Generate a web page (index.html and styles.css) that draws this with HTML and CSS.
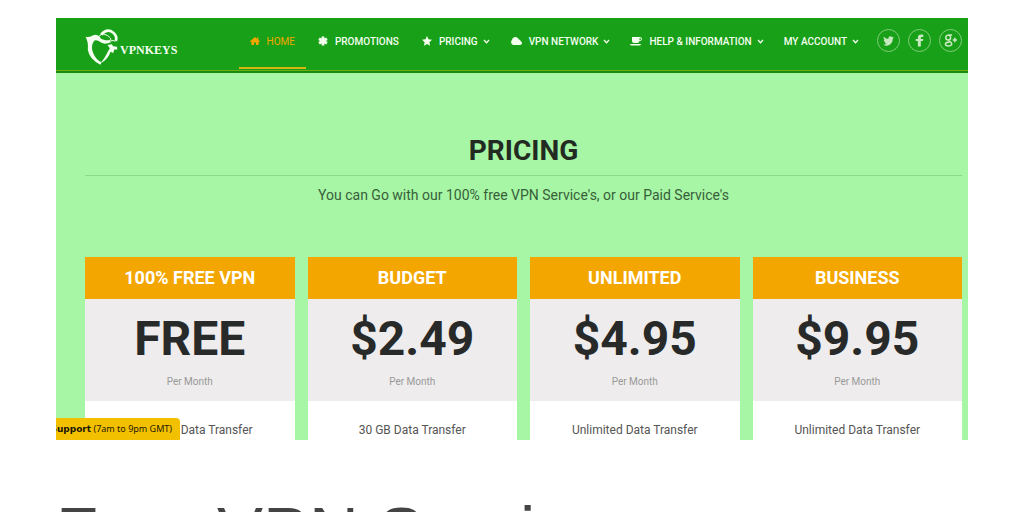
FILE: index.html
```html
<!DOCTYPE html>
<html lang="en">
<head>
<meta charset="utf-8">
<title>VPNKEYS Pricing</title>
<link rel="stylesheet" href="styles.css">
</head>
<body>
<div class="site">
  <header class="header">
    <a class="logo" href="#">
      <svg class="logo-mark" viewBox="104 56 98 108" aria-hidden="true">
        <path fill="#f4fff0" d="M105 79Q118 82 128 75Q138 70 146 78Q150 87 160 88Q170 92 178 88L181 96Q160 106 146 93Q134 86 130 93Q120 108 128 128Q136 148 153 156L150 163Q116 146 112 118Q114 94 105 79Z"/>
        <path fill="none" stroke="#f4fff0" stroke-width="8" d="M152 73Q166 56 182 63Q202 74 196 92"/>
        <path fill="none" stroke="#f4fff0" stroke-width="3" d="M142 80L156 70L172 76Q182 82 182 92M182 92Q188 88 194 93"/>
        <path fill="#f4fff0" d="M171 104L184 102L188 108L200 109L200 118L192 117L188 128L180 124Q174 146 150 159Q164 142 171 126L178 114Z"/>
      </svg>
      <span class="logo-text">VPNKEYS</span>
    </a>
    <nav class="nav" aria-label="Main">
      <a class="nav-item active" href="#"><svg class="icon" viewBox="0 0 10 10"><path d="M5 1L7 2.700V1.500H8.400V4L10 5.300L9.300 6L8.600 5.500V9H6V6.500H4V9H1.400V5.500L.7 6L0 5.300Z"/></svg>HOME</a>
      <a class="nav-item" href="#"><svg class="icon" viewBox="0 0 10 10"><path stroke="currentColor" stroke-width="2.800" d="M5 .5V9.500M1 2.700L9 7.300M9 2.700L1 7.300"/></svg>PROMOTIONS</a>
      <a class="nav-item menu" href="#"><svg class="icon" viewBox="0 0 10 10"><path d="M5 0L6.500 3.300L10 3.800L7.400 6.200L8.100 9.800L5 8L1.900 9.800L2.600 6.200L0 3.800L3.500 3.300Z"/></svg>PRICING<svg class="chevron" viewBox="0 0 7 5"><path d="M1 1L3.500 3.800L6 1"/></svg></a>
      <a class="nav-item menu" href="#"><svg class="icon wide" viewBox="0 0 12 10"><path d="M3 9A3 3 0 0 1 2 4Q2.500 1 5.500 1Q8 1 9 3.500Q10.500 3.500 10.600 5Q12 6 12 7Q12 9 10 9Z"/></svg>VPN NETWORK<svg class="chevron" viewBox="0 0 7 5"><path d="M1 1L3.500 3.800L6 1"/></svg></a>
      <a class="nav-item menu" href="#"><svg class="icon wide" viewBox="0 0 12 10"><path fill-rule="evenodd" d="M2 1H9.500Q12 1 12 3Q12 5 9.300 5.200Q9 7 7.500 7H4Q2 7 2 5ZM9.500 2V4.200Q11 4.200 11 3Q11 2 9.500 2ZM0 8H11Q11 9.500 9 9.500H2Q0 9.500 0 8Z"/></svg>HELP &amp; INFORMATION<svg class="chevron" viewBox="0 0 7 5"><path d="M1 1L3.500 3.800L6 1"/></svg></a>
      <a class="nav-item menu" href="#">MY ACCOUNT<svg class="chevron" viewBox="0 0 7 5"><path d="M1 1L3.500 3.800L6 1"/></svg></a>
    </nav>
    <div class="social">
      <a href="#" aria-label="Twitter"><svg viewBox="0 0 24 24"><path d="M22 6Q20 7 19.500 7Q21 6 21.500 4.500Q20 5.500 18.500 5.700C15 2.500 11 5 12 9Q7 9 3.500 5Q2 8.500 5 11Q4 11 3 10.400Q3 14 6.500 15H4.600Q5.600 17.500 8.500 18Q6 20 2 20C12 25 20 18 20 8.500Q21.500 7.500 22 6Z"/></svg></a>
      <a href="#" aria-label="Facebook"><svg viewBox="0 0 24 24"><path d="M9 23V13H5V9H9V7Q9 1 15 1H19V5.500H16.500Q14.500 5.500 14.500 7.500V9H19L18.300 13H14.500V23Z"/></svg></a>
      <a href="#" aria-label="Google Plus"><svg viewBox="0 0 24 24"><path fill="none" stroke="currentColor" stroke-width="2.800" d="M15 2H9C1 2 2 11 8 11C14 11 13 3 9 2M9 11Q8 13 11 14C17 18 14 22 8 22C0 22 1 15 10 15M16 11H24M20 7V15"/></svg></a>
    </div>
  </header>
  <main class="pricing">
    <h1 class="title">PRICING</h1>
    <p class="subtitle">You can Go with our 100% free VPN Service's, or our Paid Service's</p>
    <div class="plans">
      <section class="plan"><h2 class="plan-name">100% FREE VPN</h2><div class="plan-price"><strong class="amount">FREE</strong><span class="period">Per Month</span></div><p class="feature">Unlimited Data Transfer</p></section>
      <section class="plan"><h2 class="plan-name">BUDGET</h2><div class="plan-price"><strong class="amount">$2.49</strong><span class="period">Per Month</span></div><p class="feature">30 GB Data Transfer</p></section>
      <section class="plan"><h2 class="plan-name">UNLIMITED</h2><div class="plan-price"><strong class="amount">$4.95</strong><span class="period">Per Month</span></div><p class="feature">Unlimited Data Transfer</p></section>
      <section class="plan"><h2 class="plan-name">BUSINESS</h2><div class="plan-price"><strong class="amount">$9.95</strong><span class="period">Per Month</span></div><p class="feature">Unlimited Data Transfer</p></section>
    </div>
  </main>
  <div class="support"><span><b>Support</b> (7am to 9pm GMT)</span></div>
</div>
<h2 class="caption">Free VPN Service</h2>
</body>
</html>
```

FILE: styles.css
```css
* { box-sizing: border-box; }
body {
  margin: 0;
  padding: 18px 56px 0;
  height: 100vh;
  overflow: hidden;
  background: #fff;
  font-family: Roboto, "Liberation Sans", sans-serif;
}
h1, h2, p { margin: 0; }
a { color: inherit; text-decoration: none; }
.site { position: relative; overflow: hidden; background: #a6f6a6; }
.header {
  display: flex;
  padding: 0 6px 0 29px;
  height: 55px;
  background: #18a018;
  border-bottom: 2px solid #198a10;
  box-shadow: inset 0 -1px #6fb010;
  color: #f4fff0;
}
.logo { display: flex; align-items: center; gap: 2px; height: 57px; }
.logo-mark { width: 33px; height: 36px; }
.logo-text { padding-top: 8px; font: bold 12px "Liberation Serif", serif; }
.nav { display: flex; gap: 1px; margin-left: auto; height: 51px; }
.nav-item {
  display: flex;
  align-items: center;
  padding: 0 11px 3px;
  border-bottom: 2px solid transparent;
  font-size: 10px;
  font-weight: 500;
  white-space: nowrap;
}
.nav-item.menu { padding-right: 8px; }
.nav-item.active { color: #f3a600; border-color: #d8b810; font-weight: 400; }
.icon { width: 10px; height: 10px; margin-right: 7px; fill: currentColor; }
.icon.wide { width: 12px; }
.chevron { width: 7px; height: 5px; margin-left: 5px; fill: none; stroke: currentColor; stroke-width: 1.3; }
.social { display: flex; gap: 8px; margin-left: 10px; padding-top: 11px; }
.social a {
  display: grid;
  place-items: center;
  width: 23px;
  height: 23px;
  border: 1px solid #80cc78;
  border-radius: 50%;
  color: #c8e8c0;
}
.social svg { width: 13px; height: 13px; fill: currentColor; }
.pricing { padding: 61px 6px 0 29px; text-align: center; }
.title {
  padding-bottom: 7px;
  border-bottom: 1px solid #8cd88c;
  color: #222a22;
  font-size: 28px;
  font-weight: 700;
  line-height: 34px;
}
.subtitle { padding-top: 8px; color: #386038; font-size: 14px; line-height: 22px; }
.plans { display: grid; grid-template-columns: repeat(4, 1fr); gap: 13px; padding-top: 51px; }
.plan { background: #fff; }
.plan-name { background: #f4a600; color: #fff; font-size: 18px; font-weight: 700; line-height: 42px; }
.plan-price { display: flex; flex-direction: column; height: 102px; background: #eeecec; }
.amount { padding-top: 12px; color: #282a2a; font-size: 48px; line-height: 56px; }
.period { padding-top: 7px; color: #999; font-size: 10px; line-height: 16px; }
.feature { padding: 21px 0 2px; color: #555; font-size: 12px; line-height: 16px; }
.support {
  position: absolute;
  left: 0;
  bottom: 0;
  display: flex;
  justify-content: flex-end;
  width: 124px;
  padding-right: 8px;
  overflow: hidden;
  border-radius: 0 4px 0 0;
  background: #f3c000;
  color: #1c1800;
  font: 9px/22px "Noto Sans", sans-serif;
  white-space: nowrap;
}
.support b { font-family: "DejaVu Sans", sans-serif; }
.caption { padding-top: 52px; color: #444; font: 400 69px/80px "Liberation Sans", Arial, sans-serif; white-space: nowrap; }
```
